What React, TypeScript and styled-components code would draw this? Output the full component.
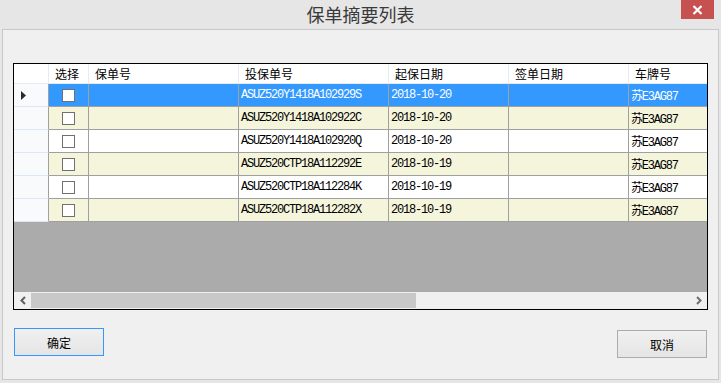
import * as React from "react";
import styled, { createGlobalStyle } from "styled-components";

const GlobalStyle = createGlobalStyle`
  html, body {
    margin: 0;
    padding: 0;
    background: #e6e6e6;
  }
  body {
    font-family: "Noto Sans CJK SC", "Noto Sans", sans-serif;
  }
`;

const Window = styled.div`
  width: 721px;
  height: 383px;
  display: flex;
  flex-direction: column;
  background: #e6e6e6;
  overflow: hidden;
`;

const TitleBar = styled.div`
  height: 29px;
  flex: none;
  display: grid;
  grid-template-columns: 1fr auto 1fr;
  align-items: start;
`;

const Title = styled.div`
  grid-column: 2;
  font-size: 18px;
  line-height: 28px;
  color: #3a3a3a;
`;

const CloseButton = styled.div`
  grid-column: 3;
  justify-self: end;
  margin-right: 7px;
  width: 33px;
  height: 19px;
  background: #c75050;
  display: flex;
  align-items: center;
  justify-content: center;
`;

const Panel = styled.div`
  margin: 0 2px;
  height: 351px;
  box-sizing: border-box;
  border: 1px solid #c8c8c8;
  background: #f0f0f0;
  padding: 33px 10px 0 10px;
  display: flex;
  flex-direction: column;
`;

const Grid = styled.div`
  height: 247px;
  box-sizing: border-box;
  border: 1px solid #000;
  display: flex;
  flex-direction: column;
  background: #ababab;
`;

const GridBody = styled.div`
  flex: 1;
  overflow: hidden;
  background: #ababab;
`;

const HeaderRow = styled.div`
  display: flex;
  height: 20px;
  box-sizing: border-box;
  border-bottom: 1px solid #e3ebf5;
  background: #fff;
`;

const HeaderCell = styled.div<{ $w: number }>`
  flex: none;
  width: ${(p) => p.$w}px;
  box-sizing: border-box;
  border-right: 1px solid #e3ebf5;
  padding-left: 6px;
  font-size: 12px;
  line-height: 19px;
  color: #000;
  white-space: nowrap;
`;

const Row = styled.div<{ $bg: string; $fg: string }>`
  display: flex;
  height: 23px;
  background: ${(p) => p.$bg};
  color: ${(p) => p.$fg};
`;

const RowHeader = styled.div`
  flex: none;
  width: 35px;
  box-sizing: border-box;
  background: #f9fafb;
  border-right: 1px solid #a0a0a0;
  border-bottom: 1px solid #dde7f3;
  padding-left: 7px;
  display: flex;
  align-items: center;
`;

const Cell = styled.div<{ $w: number; $center?: boolean }>`
  flex: none;
  width: ${(p) => p.$w}px;
  box-sizing: border-box;
  border-right: 1px solid #a0a0a0;
  border-bottom: 1px solid #a0a0a0;
  padding-left: 2px;
  display: flex;
  align-items: center;
  justify-content: ${(p) => (p.$center ? "center" : "flex-start")};
  font-family: "Liberation Mono", "Noto Sans CJK SC", monospace;
  font-size: 12px;
  letter-spacing: -1.2px;
  white-space: nowrap;
  overflow: hidden;
`;

const CheckBox = styled.div`
  width: 13px;
  height: 13px;
  box-sizing: border-box;
  border: 1px solid #707070;
  background: #fff;
  margin-right: 2px;
`;

const HScroll = styled.div`
  height: 17px;
  flex: none;
  display: flex;
  align-items: center;
  background: #f0f0f0;
`;

const ScrollArrow = styled.div`
  width: 17px;
  height: 17px;
  flex: none;
  display: flex;
  align-items: center;
  justify-content: center;
`;

const ScrollTrack = styled.div`
  flex: 1;
  height: 15px;
  display: flex;
`;

const ScrollThumb = styled.div`
  width: 385px;
  height: 15px;
  background: #c8c8c8;
`;

const Footer = styled.div`
  display: flex;
  justify-content: space-between;
  align-items: flex-start;
  margin-top: 18px;
  padding: 0 1px;
`;

const Button = styled.div<{ $focused?: boolean; $drop?: number }>`
  width: 90px;
  height: 28px;
  box-sizing: border-box;
  margin-top: ${(p) => p.$drop || 0}px;
  border: 1px solid ${(p) => (p.$focused ? "#3399ff" : "#acacac")};
  background: linear-gradient(#f0f0f0, #e5e5e5);
  display: flex;
  align-items: center;
  justify-content: center;
  font-size: 12px;
  color: #000;
`;

const columns = [
  { title: "选择", width: 40 },
  { title: "保单号", width: 150 },
  { title: "投保单号", width: 150 },
  { title: "起保日期", width: 120 },
  { title: "签单日期", width: 120 },
  { title: "车牌号", width: 100 },
];

const rows = [
  ["ASUZ520Y1418A102929S", "2018-10-20"],
  ["ASUZ520Y1418A102922C", "2018-10-20"],
  ["ASUZ520Y1418A102920Q", "2018-10-20"],
  ["ASUZ520CTP18A112292E", "2018-10-19"],
  ["ASUZ520CTP18A112284K", "2018-10-19"],
  ["ASUZ520CTP18A112282X", "2018-10-19"],
];

function App() {
  return (
    <Window>
      <GlobalStyle />
      <TitleBar>
        <Title>保单摘要列表</Title>
        <CloseButton>
          <svg width="11" height="10" viewBox="0 0 11 10">
            <path d="M1.5 1 L9.5 9 M9.5 1 L1.5 9" stroke="#fff" strokeWidth="2.2" />
          </svg>
        </CloseButton>
      </TitleBar>
      <Panel>
        <Grid>
          <GridBody>
            <HeaderRow>
              <HeaderCell $w={35} />
              {columns.map((c) => (
                <HeaderCell key={c.title} $w={c.width}>
                  {c.title}
                </HeaderCell>
              ))}
            </HeaderRow>
            {rows.map((r, i) => {
              const selected = i === 0;
              const bg = selected ? "#3399ff" : i % 2 === 1 ? "#f5f5dc" : "#fff";
              return (
                <Row key={i} $bg={bg} $fg={selected ? "#fff" : "#000"}>
                  <RowHeader>
                    {selected && (
                      <svg width="5" height="9" viewBox="0 0 5 9">
                        <polygon points="0,0 5,4.5 0,9" fill="#2b2b2b" />
                      </svg>
                    )}
                  </RowHeader>
                  <Cell $w={40} $center>
                    <CheckBox />
                  </Cell>
                  <Cell $w={150} />
                  <Cell $w={150}>{r[0]}</Cell>
                  <Cell $w={120}>{r[1]}</Cell>
                  <Cell $w={120} />
                  <Cell $w={100}>苏E3AG87</Cell>
                </Row>
              );
            })}
          </GridBody>
          <HScroll>
            <ScrollArrow>
              <svg width="6" height="9" viewBox="0 0 6 9">
                <polyline points="5,1 1.5,4.5 5,8" fill="none" stroke="#606060" strokeWidth="2" />
              </svg>
            </ScrollArrow>
            <ScrollTrack>
              <ScrollThumb />
            </ScrollTrack>
            <ScrollArrow>
              <svg width="6" height="9" viewBox="0 0 6 9">
                <polyline points="1,1 4.5,4.5 1,8" fill="none" stroke="#707070" strokeWidth="2" />
              </svg>
            </ScrollArrow>
          </HScroll>
        </Grid>
        <Footer>
          <Button $focused>确定</Button>
          <Button $drop={2}>取消</Button>
        </Footer>
      </Panel>
    </Window>
  );
}

export default App;
